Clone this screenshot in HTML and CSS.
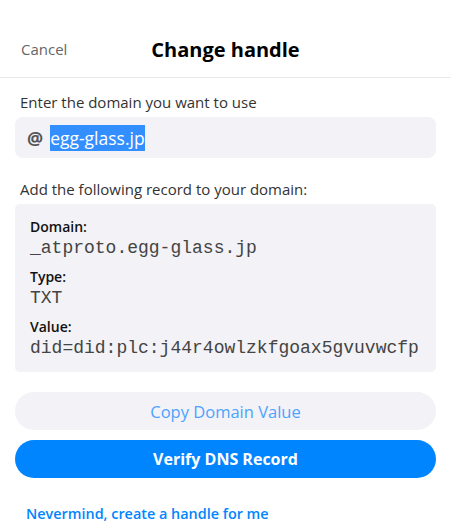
FILE: index.html
```html
<!DOCTYPE html>
<html lang="en">
<head>
    <meta charset="UTF-8">
    <title>Change handle</title>
    <link rel="stylesheet" href="styles.css">
</head>
<body>

<div class="sheet">
    <div class="header">
        <span class="cancel">Cancel</span>
        <h2>Change handle</h2>
    </div>

    <div class="content">
        <label class="label">Enter the domain you want to use</label>
        <div class="input-group">
            <span class="at">@</span>
            <span class="domain"><span class="selected">egg-glass.jp</span></span>
        </div>

        <label class="label record-label">Add the following record to your domain:</label>
        <div class="record">
            <div class="field">
                <div class="field-name">Domain:</div>
                <div class="field-value">_atproto.egg-glass.jp</div>
            </div>
            <div class="field">
                <div class="field-name">Type:</div>
                <div class="field-value">TXT</div>
            </div>
            <div class="field">
                <div class="field-name">Value:</div>
                <div class="field-value">did=did:plc:j44r4owlzkfgoax5gvuvwcfp</div>
            </div>
        </div>

        <button class="btn btn-light">Copy Domain Value</button>
        <button class="btn btn-primary">Verify DNS Record</button>

        <a class="link">Nevermind, create a handle for me</a>
    </div>
</div>

</body>
</html>
```

FILE: styles.css
```css
body {
    font-family: "Open Sans", "Noto Sans", sans-serif;
    background-color: #fff;
    color: #000;
    margin: 0;
    padding: 0;
}

.sheet {
    width: 451px;
}

.header {
    position: relative;
    height: 78px;
    border-bottom: 1px solid #e8e8e8;
    display: flex;
    align-items: center;
    justify-content: center;
    padding-top: 22px;
    box-sizing: border-box;
}

.cancel {
    position: absolute;
    left: 21px;
    top: 39px;
    font-size: 15px;
    color: #666;
}

h2 {
    margin: 0;
    font-size: 20px;
    font-weight: 700;
}

.content {
    padding: 14px 15px 0 15px;
    display: flex;
    flex-direction: column;
}

.label {
    font-size: 15px;
    color: #333;
    padding-left: 5px;
    line-height: 20px;
}

.input-group {
    margin-top: 5px;
    height: 41px;
    border-radius: 8px;
    background-color: #f2f2f7;
    display: flex;
    align-items: center;
    padding-left: 12px;
}

.at {
    font-size: 18px;
    font-weight: 700;
    color: #555;
    margin-right: 7px;
}

.domain {
    font-size: 17.5px;
}

.selected {
    background-color: #338fff;
    color: #fff;
    padding: 1px 0;
}

.record-label {
    margin-top: 21px;
}

.record {
    margin-top: 5px;
    background-color: #f2f2f7;
    border-radius: 5px;
    padding: 13px 15px 13px 15px;
    display: flex;
    flex-direction: column;
    gap: 8px;
}

.field-name {
    font-size: 14px;
    font-weight: 600;
    color: #111;
    line-height: 20px;
}

.field-value {
    font-family: "Liberation Mono", monospace;
    font-size: 18px;
    color: #444;
    line-height: 22px;
}

.btn {
    width: 100%;
    height: 38px;
    border: none;
    border-radius: 19px;
    font-family: inherit;
    font-size: 16.5px;
    cursor: pointer;
}

.btn-light {
    margin-top: 20px;
    background-color: #f2f2f7;
    color: #4da3ff;
}

.btn-primary {
    margin-top: 10px;
    background-color: #0085ff;
    color: #fff;
    font-weight: 700;
    font-size: 16px;
}

.link {
    margin-top: 26px;
    padding-left: 11px;
    font-size: 14.4px;
    font-weight: 600;
    color: #0085ff;
}
```
